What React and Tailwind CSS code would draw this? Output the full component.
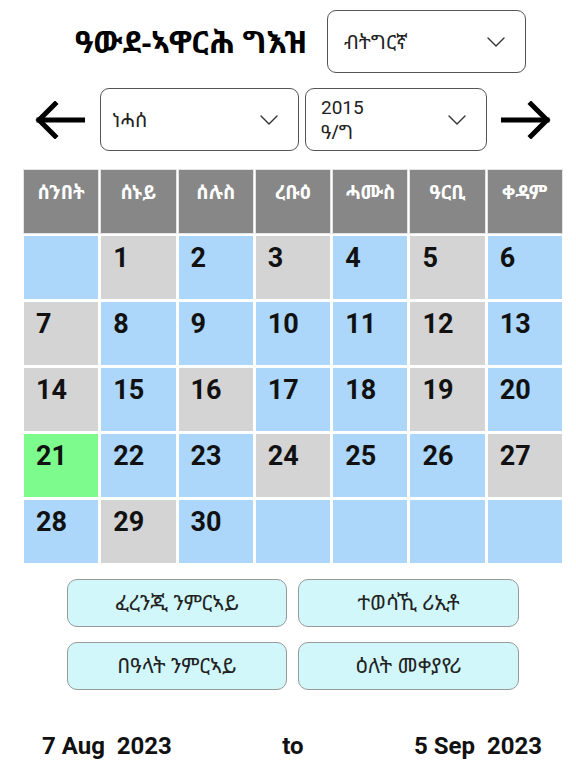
import React from "react";

const ETH = { fontFamily: '"Noto Sans Ethiopic", "Abyssinica SIL", "DejaVu Sans", "Noto Sans", sans-serif' };
const NUM = { fontFamily: 'Roboto, "Liberation Sans", sans-serif' };

const Chevron = () => (
  <svg width="18" height="10" viewBox="0 0 18 10" fill="none" stroke="#333" strokeWidth="1.4" strokeLinecap="round" strokeLinejoin="round">
    <path d="M1 1 L9 9 L17 1" />
  </svg>
);

const Arrow = ({ dir }) => (
  <svg width="50" height="38" viewBox="0 0 50 38" fill="none" stroke="#000" strokeWidth="5" strokeLinecap="square" strokeLinejoin="miter">
    {dir === "left" ? (
      <>
        <path d="M4 19 H48" />
        <path d="M20 3 L4 19 L20 35" />
      </>
    ) : (
      <>
        <path d="M2 19 H46" />
        <path d="M30 3 L46 19 L30 35" />
      </>
    )}
  </svg>
);

const B = "bg-[#acd7fb]";
const G = "bg-[#d4d4d4]";
const GR = "bg-[#7dfb8d]";

const rows = [
  [["", B], ["1", G], ["2", B], ["3", G], ["4", B], ["5", G], ["6", B]],
  [["7", G], ["8", B], ["9", B], ["10", B], ["11", B], ["12", G], ["13", B]],
  [["14", G], ["15", B], ["16", G], ["17", B], ["18", B], ["19", G], ["20", B]],
  [["21", GR], ["22", B], ["23", B], ["24", G], ["25", B], ["26", B], ["27", G]],
  [["28", B], ["29", G], ["30", B], ["", B], ["", B], ["", B], ["", B]],
];

const days = ["ሰንበት", "ሰኑይ", "ሰሉስ", "ረቡዕ", "ሓሙስ", "ዓርቢ", "ቀዳም"];

export default function App() {
  return (
    <div className="w-[576px] h-[768px] bg-white relative overflow-hidden">
      {/* Top row */}
      <div className="flex items-center pt-[10px] pl-[75px] gap-[22px]">
        <div className="w-[230px] text-[31px] font-bold text-black leading-none whitespace-nowrap" style={ETH}>
          ዓውደ-ኣዋርሕ ግእዝ
        </div>
        <div className="w-[199px] h-[63px] border border-[#555] rounded-[9px] flex items-center justify-between pl-[16px] pr-[20px]">
          <span className="text-[20px] text-[#222]" style={ETH}>ብትግርኛ</span>
          <Chevron />
        </div>
      </div>

      {/* Second row */}
      <div className="flex items-center mt-[15px] pl-[35px]">
        <Arrow dir="left" />
        <div className="ml-[15px] w-[199px] h-[63px] border border-[#555] rounded-[9px] flex items-center justify-between pl-[11px] pr-[20px]">
          <span className="text-[20px] text-[#222]" style={ETH}>ነሓሰ</span>
          <Chevron />
        </div>
        <div className="ml-[6px] w-[182px] h-[63px] border border-[#555] rounded-[9px] flex items-center justify-between pl-[15px] pr-[20px]">
          <div className="flex flex-col text-[19px] text-[#222]" style={ETH}>
            <div className="leading-[22px] h-[22px]" style={NUM}>2015</div>
            <div className="leading-[22px] h-[22px] mt-[2px]">ዓ/ግ</div>
          </div>
          <Chevron />
        </div>
        <div className="ml-[14px]">
          <Arrow dir="right" />
        </div>
      </div>

      {/* Calendar grid */}
      <div className="mt-[19px] ml-[24px] w-[538px] grid grid-cols-7 gap-[3px]">
        {days.map((d) => (
          <div key={d} className="h-[63px] bg-[#878787] flex justify-center pt-[8px] outline outline-1 outline-[#e4e4e4]">
            <span className="text-white font-bold text-[19px]" style={ETH}>{d}</span>
          </div>
        ))}
        {rows.flat().map(([n, c], i) => (
          <div key={i} className={`h-[63px] ${c} pl-[12px] pt-[9px]`}>
            <span className="text-[27px] leading-none font-bold text-[#111]" style={NUM}>{n}</span>
          </div>
        ))}
      </div>

      {/* Buttons */}
      <div className="mt-[16px] ml-[67px] grid grid-cols-[220px_221px] gap-x-[11px] gap-y-[15px]">
        {["ፈረንጂ ንምርኣይ", "ተወሳኺ ሪኢቶ", "በዓላት ንምርኣይ", "ዕለት መቀያየሪ"].map((t) => (
          <div key={t} className="h-[48px] bg-[#d1f7fa] border border-[#999] rounded-[10px] flex items-center justify-center">
            <span className="text-[21px] text-[#222]" style={ETH}>{t}</span>
          </div>
        ))}
      </div>

      {/* Footer */}
      <div className="mt-[38px] pl-[42px] pr-[34px] flex items-center justify-between text-[24px] font-bold text-[#111]" style={NUM}>
        <span className="whitespace-pre">7 Aug  2023</span>
        <span>to</span>
        <span className="whitespace-pre">5 Sep  2023</span>
      </div>
    </div>
  );
}
